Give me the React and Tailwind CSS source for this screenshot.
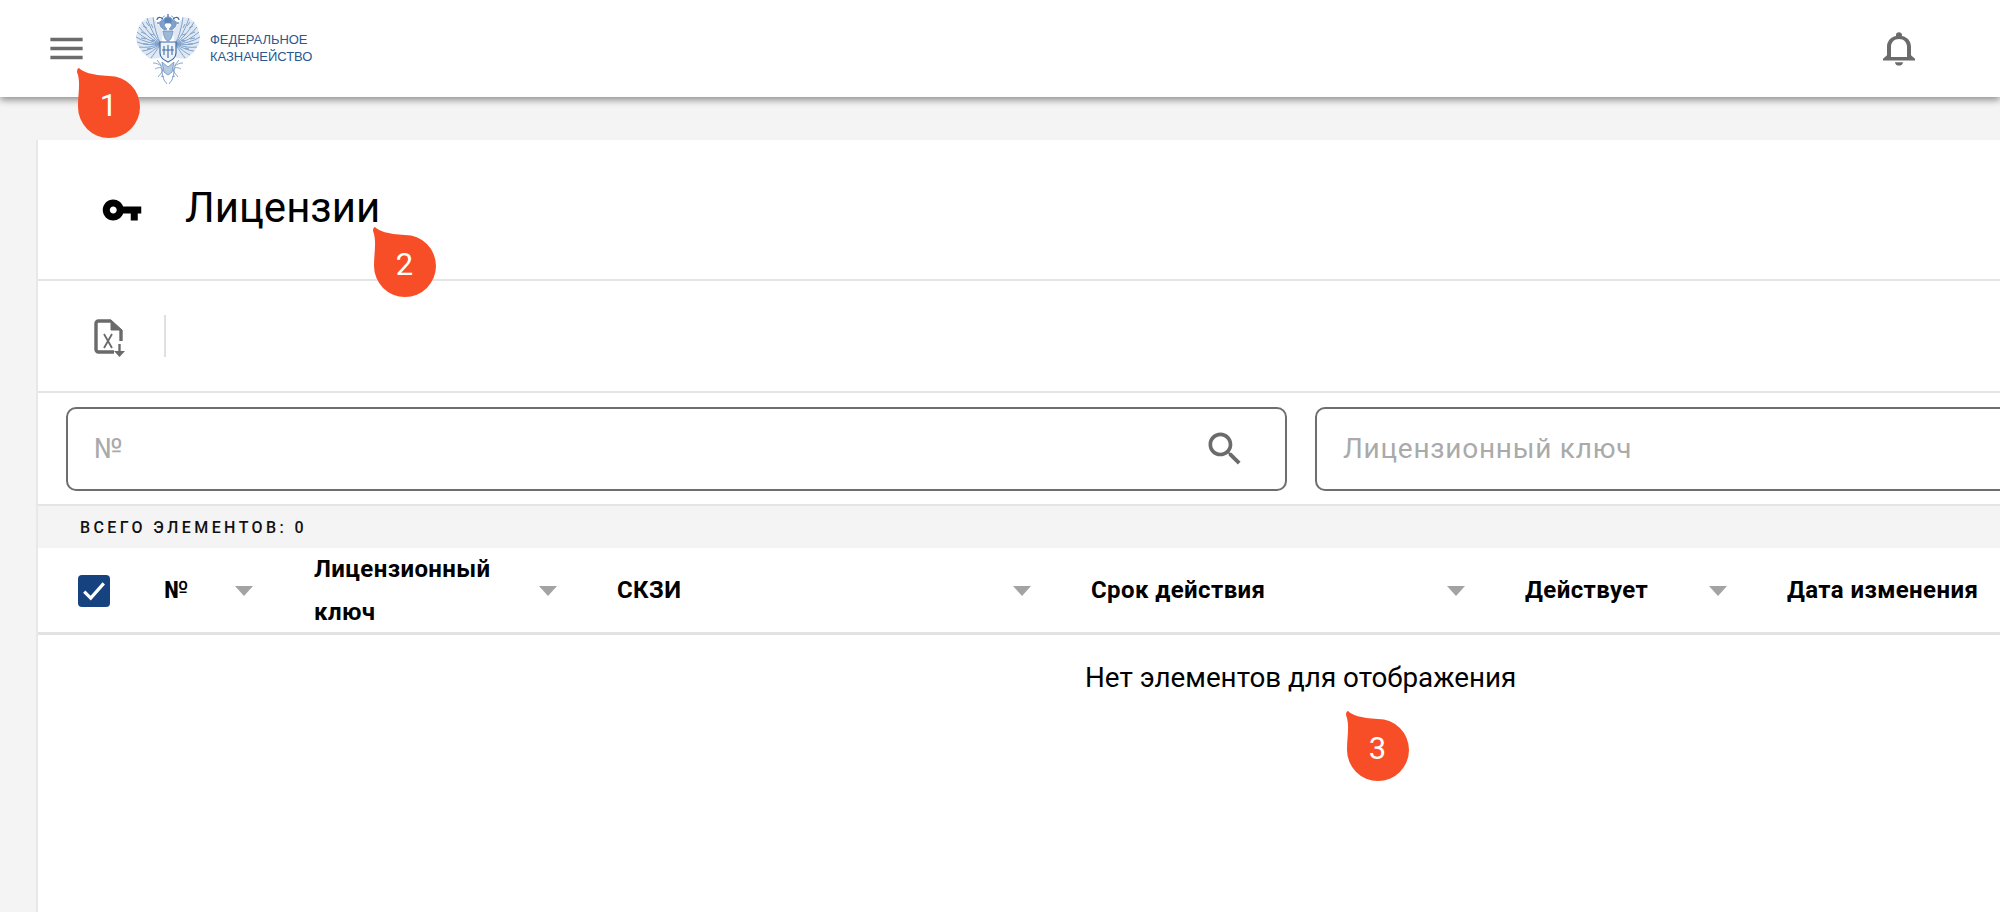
const columns = [
  { title: 'Лицензионный ключ', className: 'w-[303px]' },
  { title: 'СКЗИ', className: 'w-[474px]' },
  { title: 'Срок действия', className: 'w-[434px]' },
  { title: 'Действует', className: 'w-[262px]' },
]

// wing feather tips of the left half, fanned out of the shoulder
const feathers = [
  [17, 3], [11, 4], [6, 8], [3, 13], [1, 18], [0, 23], [1, 28], [3, 33], [6, 37], [10, 41], [15, 44],
]

function Eagle() {
  const half = (
    <g>
      <path d="M27 17L19 6 15 3 8 6 3 12 0 22 1 30 6 38 14 45 24 44z" fill="#dfe8f3" stroke="none" />
      {feathers.map(([x, y]) => (
        <path key={`${x}-${y}`} d={`M25 30Q${(x + 25) / 2 - 2} ${(y + 30) / 2 + 3} ${x} ${y}`} />
      ))}
      <path d="M7 12l4 2M5 18l5 2M5 24l5 1M7 30l5 0M11 35l4-1M15 10l2 4M10 8l3 4M14 20l4 1M15 27l4-1" />
      <path d="M29 16c-3-1-6-4-5-8 1-2 4-3 6-1 0 2-1 3-2 4 1 2 2 3 3 4z" fill="#7fa0c9" />
      <path d="M24 8l-3 1 3 1" />
      <path d="M26 6c0-3 2-4 3-4" />
      <path d="M21 46l4 5 1 7-4 5M17 49c3 0 6 1 8 3M19 55c2-1 4-2 6-1" />
      <path d="M28 50l-2 9 2 7 3 4M25 62l3 1" />
    </g>
  )
  return (
    <svg viewBox="0 0 64 70" className="h-[70px] w-[64px] shrink-0" fill="none" stroke="#6a90bf" strokeWidth="0.8">
      {half}
      <g transform="translate(64 0) scale(-1 1)">{half}</g>
      <path d="M28 6c0-4 8-4 8 0l-1 3h-6z" fill="#5b85b9" />
      <path d="M32 0v3M27 5c-4-3-6-1-6 1M37 5c4-3 6-1 6 1" stroke="#3f6ca6" strokeWidth="1.2" />
      <path d="M27 17c1 6 2 9 5 10 3-1 4-4 5-10z" fill="#9db7d8" />
      <path d="M24 28h16v11c0 5-4 7-8 9-4-2-8-4-8-9z" fill="#eef3f9" stroke="#3f6ca6" strokeWidth="1.2" />
      <path d="M28 32v9M32 31v13M36 32v9M26 36h12" stroke="#3f6ca6" strokeWidth="1.1" />
      <path d="M26 48l6 5 6-5-2 10-4 3-4-3z" fill="#b7cbe3" />
    </svg>
  )
}

function ExcelIcon() {
  return (
    <svg viewBox="0 0 31 38" className="h-[38px] w-[31px]" fill="none" stroke="#6a6a6a">
      <path d="M17 2H4.5A2.5 2.5 0 0 0 2 4.5v26A2.5 2.5 0 0 0 4.5 33H20" strokeWidth="3.4" />
      <path d="M17 1v10h11z" fill="#6a6a6a" stroke="#6a6a6a" strokeWidth="1" strokeLinejoin="round" />
      <path d="M27 11v11" strokeWidth="3.4" />
      <path d="M10 15l8 14M18 15l-8 14" strokeWidth="1.8" />
      <path d="M25.5 25v8" strokeWidth="2.4" />
      <path d="M20 32h11l-5.5 6z" fill="#6a6a6a" stroke="none" />
    </svg>
  )
}

function Arrow() {
  return <span className="h-0 w-0 shrink-0 border-x-[9px] border-t-[10px] border-x-transparent border-t-[#a3a3a3]" />
}

function Badge({ n, className }) {
  return (
    <div className={`absolute z-20 h-[70px] w-[63px] ${className}`}>
      <svg viewBox="0 0 63 70" className="absolute inset-0 h-[70px] w-[63px]">
        <path d="M2 0C6 4 14 7 32 8A31 31 0 1 1 1 39C1 25 4 14 0 4 0 1 1 0 2 0Z" fill="#f74e27" />
      </svg>
      <span className="absolute left-0 right-0 top-[19px] text-center text-[31px] leading-[38px] text-white">{n}</span>
    </div>
  )
}

export default function App() {
  return (
    <div className="relative h-[912px] w-[2000px] overflow-hidden bg-[#f4f4f4] font-['Roboto',sans-serif] text-black">
      <Badge n="1" className="left-[77px] top-[68px]" />
      <Badge n="2" className="left-[373px] top-[227px]" />
      <Badge n="3" className="left-[1346px] top-[711px]" />

      <header className="relative z-10 flex h-[97px] items-center bg-white shadow-[0_3px_7px_rgba(0,0,0,0.42)]">
        <svg viewBox="0 0 24 24" className="mb-[1px] ml-[45px] h-[43px] w-[43px]" fill="#6b6b6b">
          <path d="M3 18h18v-2H3v2zm0-5h18v-2H3v2zm0-7v2h18V6H3z" />
        </svg>
        <div className="mb-[-1px] ml-[48px]"><Eagle /></div>
        <div className="mb-[2px] ml-[10px] font-['Liberation_Sans',sans-serif] text-[13px] leading-[17px] tracking-[-0.05px] text-[#2b5790]">
          <div>ФЕДЕРАЛЬНОЕ</div>
          <div>КАЗНАЧЕЙСТВО</div>
        </div>
        <svg viewBox="0 0 24 24" preserveAspectRatio="none" className="mb-[1px] ml-auto mr-[77px] h-[41px] w-[48px]" fill="#6b6b6b">
          <path d="M12 22c1.1 0 2-.9 2-2h-4c0 1.1.89 2 2 2zm6-6v-5c0-3.07-1.64-5.64-4.5-6.32V4c0-.83-.67-1.5-1.5-1.5s-1.5.67-1.5 1.5v.68C7.63 5.36 6 7.92 6 11v5l-2 2v1h16v-1l-2-2zm-2 1H8v-6c0-2.48 1.51-4.5 4-4.5s4 2.02 4 4.5v6z" />
        </svg>
      </header>

      <main className="ml-[36px] mt-[43px] h-[772px] border-l-2 border-[#e8e8e8] bg-white">
        <div className="flex h-[141px] items-center border-b-2 border-[#e4e4e4] pl-[63px]">
          <svg viewBox="0 0 24 24" className="h-[42px] w-[42px] shrink-0" fill="#000">
            <path d="M12.65 10C11.83 7.67 9.61 6 7 6c-3.31 0-6 2.69-6 6s2.69 6 6 6c2.61 0 4.83-1.67 5.65-4H17v4h4v-4h2v-4H12.65zM7 14c-1.1 0-2-.9-2-2s.9-2 2-2 2 .9 2 2-.9 2-2 2z" />
          </svg>
          <h1 className="mb-[3px] ml-[42px] text-[42px] leading-[48px] font-normal">Лицензии</h1>
        </div>

        <div className="flex h-[112px] items-center border-b-2 border-[#e4e4e4] pl-[56px] pt-[4px]">
          <ExcelIcon />
          <div className="mb-[4px] ml-[39px] h-[42px] w-[2px] bg-[#e0e0e0]" />
        </div>

        <div className="flex h-[113px] gap-[28px] border-b-2 border-[#e4e4e4] pl-[28px] pt-[14px]">
          <div className="flex h-[84px] w-[1221px] shrink-0 items-center justify-between rounded-[10px] border-2 border-[#6e6e6e] pl-[26px] pr-[38px]">
            <span className="text-[28px] tracking-[0.75px] text-[#aaaaaa]">№</span>
            <svg viewBox="0 0 24 24" className="h-[44px] w-[44px]" fill="#6b6b6b">
              <path d="M15.5 14h-.79l-.28-.27C15.41 12.59 16 11.11 16 9.5 16 5.91 13.09 3 9.5 3S3 5.91 3 9.5 5.91 16 9.5 16c1.61 0 3.09-.59 4.23-1.57l.27.28v.79l5 4.99L20.49 19l-4.99-5zm-6 0C7.01 14 5 11.99 5 9.5S7.01 5 9.5 5 14 7.01 14 9.5 11.99 14 9.5 14z" />
            </svg>
          </div>
          <div className="flex h-[84px] w-[1000px] shrink-0 items-center rounded-[10px] border-2 border-[#6e6e6e] pl-[26px]">
            <span className="text-[28px] tracking-[0.75px] text-[#aaaaaa]">Лицензионный ключ</span>
          </div>
        </div>

        <div className="flex h-[42px] items-center bg-[#f4f4f4] pl-[42px] pt-[2px] text-[16px] font-medium tracking-[3.4px] text-[#111]">
          ВСЕГО ЭЛЕМЕНТОВ: 0
        </div>

        <div className="flex h-[87px] items-center whitespace-nowrap border-b-[3px] border-[#e2e2e2] pt-[1px] text-[24px] font-bold leading-[43px] tracking-[0.4px]">
          <div className="w-[126px] shrink-0 pl-[40px]">
            <div className="flex h-[32px] w-[32px] items-center justify-center rounded-[4px] bg-[#16437f]">
              <svg viewBox="0 0 24 24" className="h-[26px] w-[26px]" fill="none" stroke="#fff" strokeWidth="3">
                <path d="M3 12.5l6 6L21 5" />
              </svg>
            </div>
          </div>
          <div className="flex w-[150px] shrink-0 items-center justify-between pr-[61px]">
            <span>№</span>
            <Arrow />
          </div>
          {columns.map((c, i) => (
            <div key={c.title} className={`flex shrink-0 items-center justify-between pr-[60px] ${c.className}`}>
              <span className={i === 0 ? 'w-[190px] whitespace-normal' : ''}>{c.title}</span>
              <Arrow />
            </div>
          ))}
          <div className="shrink-0">Дата изменения</div>
        </div>

        <div className="pl-[1047px] pt-[23px] text-[27.8px] leading-[40px]">Нет элементов для отображения</div>
      </main>
    </div>
  )
}
